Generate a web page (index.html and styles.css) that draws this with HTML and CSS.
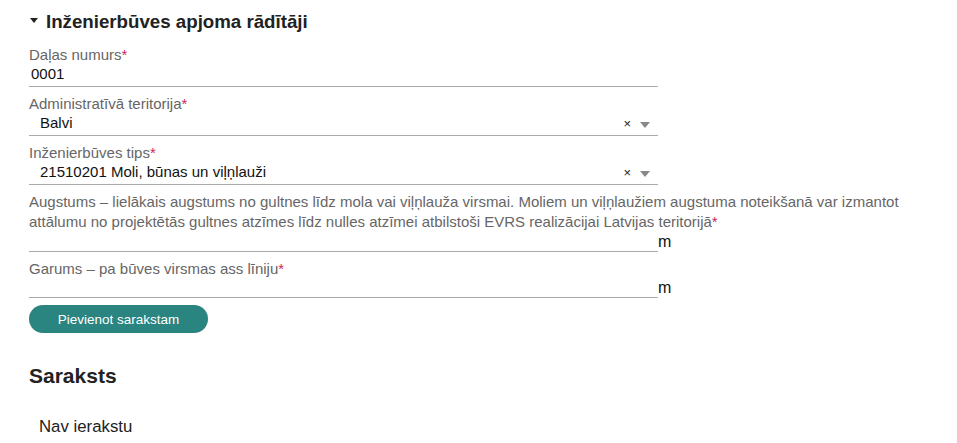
FILE: index.html
```html
<!DOCTYPE html>
<html lang="lv">
<head>
<meta charset="utf-8">
<link rel="stylesheet" href="styles.css">
</head>
<body>
<div class="page">
  <h2 class="section-title"><span class="caret"></span>Inženierbūves apjoma rādītāji</h2>

  <div class="field">
    <div class="label">Daļas numurs<span class="req">*</span></div>
    <div class="input">0001</div>
  </div>

  <div class="field">
    <div class="label">Administratīvā teritorija<span class="req">*</span></div>
    <div class="input select">
      <span class="sel-value">Balvi</span>
      <span class="sel-clear">×</span>
      <span class="sel-arrow"></span>
    </div>
  </div>

  <div class="field">
    <div class="label">Inženierbūves tips<span class="req">*</span></div>
    <div class="input select">
      <span class="sel-value">21510201 Moli, būnas un viļņlauži</span>
      <span class="sel-clear">×</span>
      <span class="sel-arrow"></span>
    </div>
  </div>

  <div class="field unit-field">
    <div class="label long">Augstums – lielākais augstums no gultnes līdz mola vai viļņlauža virsmai. Moliem un viļņlaužiem augstuma noteikšanā var izmantot attālumu no projektētās gultnes atzīmes līdz nulles atzīmei atbilstoši EVRS realizācijai Latvijas teritorijā<span class="req">*</span></div>
    <div class="unit-row">
      <div class="input num"></div>
      <span class="unit">m</span>
    </div>
  </div>

  <div class="field unit-field">
    <div class="label">Garums – pa būves virsmas ass līniju<span class="req">*</span></div>
    <div class="unit-row">
      <div class="input num"></div>
      <span class="unit">m</span>
    </div>
  </div>

  <button class="btn">Pievienot sarakstam</button>

  <h2 class="list-title">Saraksts</h2>
  <p class="empty">Nav ierakstu</p>
</div>
</body>
</html>
```

FILE: styles.css
```css
html, body {
  margin: 0;
  padding: 0;
  background: #fff;
}
body {
  font-family: "Liberation Sans", Arial, sans-serif;
  color: #222;
}
.page {
  padding: 10px 0 0 29px;
  width: 928px;
}
.section-title {
  display: flex;
  align-items: center;
  margin: 0 0 11px 0;
  font-size: 18.7px;
  line-height: 24px;
  font-weight: bold;
  color: #222;
}
.caret {
  width: 0;
  height: 0;
  border-left: 4.5px solid transparent;
  border-right: 4.5px solid transparent;
  border-top: 5px solid #222;
  margin: -3px 8px 0 1px;
}
.field {
  margin-bottom: 7px;
}
.label {
  font-size: 15px;
  line-height: 19px;
  color: #666;
}
.label.long {
  line-height: 20px;
}
.req {
  color: #d11f5a;
}
.input {
  width: 627px;
  font-size: 15px;
  line-height: 19px;
  height: 22px;
  color: #111;
  border-bottom: 1px solid #aaa;
  padding-left: 2px;
  box-sizing: content-box;
}
.select {
  display: flex;
  align-items: flex-start;
  width: 618px;
  padding-left: 11px;
}
.sel-value {
  flex: 1;
}
.sel-clear {
  font-size: 13px;
  color: #222;
  margin-right: 9px;
  line-height: 19px;
  margin-top: 1px;
}
.sel-arrow {
  width: 0;
  height: 0;
  border-left: 5px solid transparent;
  border-right: 5px solid transparent;
  border-top: 6px solid #888;
  margin-right: 8px;
  margin-top: 9px;
}
.unit-row {
  display: flex;
  align-items: flex-end;
}
.unit-row .input {
  height: 19px;
  flex: none;
}
.unit {
  font-size: 16px;
  line-height: 16px;
  color: #111;
  margin-bottom: 2px;
}
.btn {
  display: block;
  width: 179px;
  height: 28px;
  border: none;
  border-radius: 14px;
  background: #2a8480;
  color: #fff;
  font-family: "Liberation Sans", Arial, sans-serif;
  font-size: 13.5px;
  padding: 0;
  margin: 0;
}
.list-title {
  margin: 31px 0 0 0;
  font-size: 21px;
  line-height: 24px;
  font-weight: bold;
  color: #222;
}
.empty {
  margin: 29px 0 0 10px;
  font-size: 16.8px;
  line-height: 20px;
  color: #222;
}
```
